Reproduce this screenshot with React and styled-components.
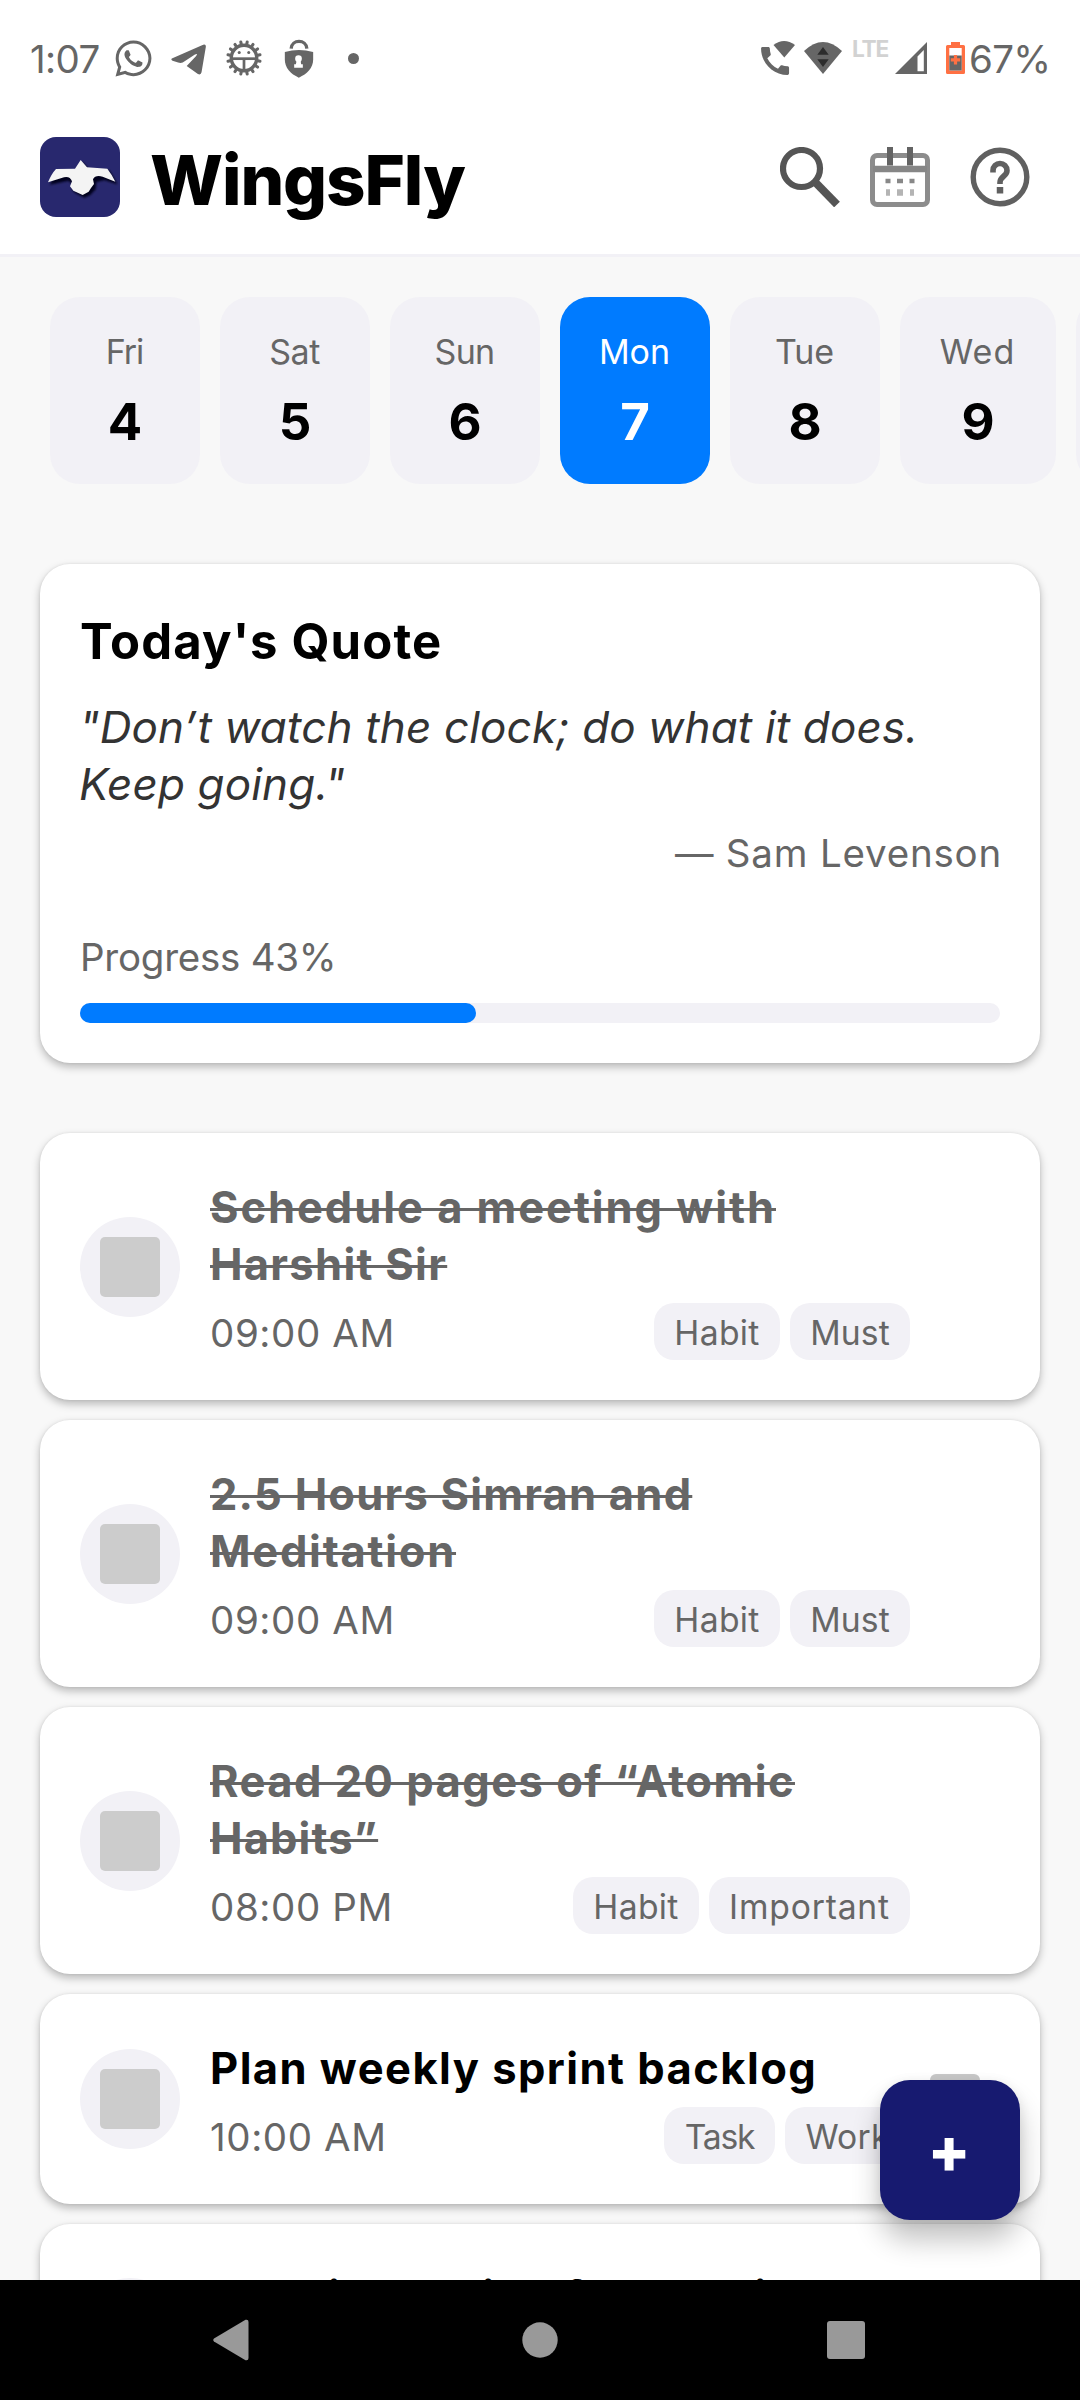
import React from "react";
import styled, { createGlobalStyle } from "styled-components";
import { FaWhatsapp } from "react-icons/fa";

const GlobalStyle = createGlobalStyle`
  *, *::before, *::after { box-sizing: border-box; }
  body { margin: 0; background: #f8f8f8; font-family: Inter, "Liberation Sans", sans-serif; }
`;

const Screen = styled.div`
  position: relative;
  width: 1080px;
  height: 2400px;
  display: flex;
  flex-direction: column;
  overflow: hidden;
  background: #f8f8f8;
  color: #000;
  white-space: nowrap;
`;

/* ---------- status bar ---------- */

const StatusBar = styled.div`
  flex: none;
  height: 100px;
  padding: 16px 31px 0 30px;
  display: flex;
  justify-content: space-between;
  align-items: center;
  background: #fff;
  color: #666;
`;

const StatusGroup = styled.div`
  display: flex;
  align-items: center;
`;

const StatusText = styled.span`
  width: ${(p) => p.$w}px;
  font-size: 38.5px;
  line-height: 46px;
  letter-spacing: ${(p) => p.$track}px;
  padding-top: 1px;
`;

const StatusIcon = styled.span`
  display: flex;
  margin-left: ${(p) => p.$gap}px;
  margin-top: ${(p) => p.$drop || 0}px;
  font-size: 41px;
`;

const Dot = styled.span`
  width: 11px;
  height: 11px;
  border-radius: 50%;
  margin-left: 34px;
  background: #666;
`;

const Network = styled.span`
  width: 37px;
  margin: 0 6px 18px 10px;
  font-size: 22.7px;
  font-weight: 700;
  line-height: 20px;
  letter-spacing: -1.2px;
  color: #d2d2d2;
`;

const TelegramGlyph = () => (
  <svg width="36" height="31" viewBox="452 72 108 94" fill="#666">
    <path d="M454 116L549 74Q558 71 557 81L544 158Q542 167 533 163L499 139L527 109Q535 99 524 104L487 128Q480 131 473 128L456 123Q450 119 454 116Z" />
  </svg>
);

const TEETH = Array.from({ length: 16 }, (_, i) => i * 22.5 + 11.25);

const BugGlyph = () => (
  <svg width="36" height="36" viewBox="-53 -53 106 106" fill="none" stroke="#666">
    {TEETH.map((a) => (
      <path key={a} d="M0 -38V-48" strokeWidth="9" strokeLinecap="round" transform={`rotate(${a})`} />
    ))}
    <circle r="37.5" strokeWidth="10" />
    <path d="M-36 2H36" strokeWidth="8" />
    <path d="M0 4V36" strokeWidth="8" />
    <circle cx="-14" cy="-16" r="4.5" fill="#666" stroke="none" />
    <circle cx="14" cy="-16" r="4.5" fill="#666" stroke="none" />
  </svg>
);

const LockGlyph = () => (
  <svg width="30" height="39" viewBox="791 55 89 117">
    <path d="M812 84C813 55 858 55 859 84" fill="none" stroke="#666" strokeWidth="10" />
    <path d="M793 94Q835 82 878 94V116C878 142 860 160 835 171C810 160 793 142 793 116Z" fill="#666" />
    <circle cx="834" cy="114" r="10" fill="#fff" />
    <path d="M829 118H840L842 131H847V141H821V131H826Z" fill="#fff" />
  </svg>
);

const WifiCallGlyph = () => (
  <svg width="36" height="36" viewBox="0 0 36 36" fill="#666">
    <path
      transform="translate(-3.6 2.3) scale(1.555)"
      d="M20.01 15.38c-1.23 0-2.42-.2-3.53-.56-.35-.12-.74-.03-1.01.24l-1.57 1.97c-2.83-1.35-5.48-3.9-6.89-6.83l1.95-1.66c.27-.28.35-.67.24-1.02-.37-1.11-.56-2.3-.56-3.53 0-.54-.45-.99-.99-.99H4.19C3.65 3 3 3.24 3 3.99 3 13.28 10.73 21 20.01 21c.71 0 .99-.63.99-1.18v-3.45c0-.54-.45-.99-.99-.99z"
    />
    <path d="M13.5 5Q24 -3 35 5L24.3 17.5Z" />
  </svg>
);

const WifiGlyph = () => (
  <svg width="38" height="32" viewBox="0 0 38 32">
    <path d="M0 9Q19 -9 38 9L19 32Z" fill="#666" />
    <path d="M13.3 12.7L19 5L24.7 12.7ZM13.3 17.3L19 25L24.7 17.3Z" fill="#2c2c2c" />
  </svg>
);

const SignalGlyph = () => (
  <svg width="32" height="32" viewBox="0 0 32 32">
    <path fillRule="evenodd" d="M0 32L32 0V32ZM22.5 14.5V29.3H28.8V8Z" fill="#666" />
  </svg>
);

const BatteryGlyph = () => (
  <svg width="19" height="32" viewBox="0 0 19 32">
    <path d="M5 0H14V3H17.5Q19 3 19 4.5V30.5Q19 32 17.5 32H1.5Q0 32 0 30.5V4.5Q0 3 1.5 3H5Z" fill="#ff7043" />
    <rect x="3.3" y="6" width="12.4" height="22.5" fill="#fff" />
    <rect x="3.3" y="13.5" width="12.4" height="15" fill="#666" />
    <path d="M9.5 13V22.5M4.8 17.8H14.2" stroke="#ff7043" strokeWidth="3.2" />
  </svg>
);

/* ---------- app header ---------- */

const Header = styled.header`
  flex: none;
  height: 157px;
  padding: 0 50px 0 40px;
  display: flex;
  align-items: center;
  background: #fff;
  border-bottom: 3px solid #f2f1f6;
`;

const Brand = styled.h1`
  flex: 1;
  margin: 0 0 0 30px;
  padding-top: 5px;
  font-size: 69px;
  line-height: 84px;
  font-weight: 800;
  letter-spacing: -1.1px;
`;

const HeaderButton = styled.button`
  display: flex;
  width: 60px;
  height: 60px;
  padding: 0;
  border: 0;
  background: none;
  margin-left: ${(p) => p.$gap || 0}px;
`;

const LogoMark = () => (
  <svg width="80" height="80" viewBox="60 351 240 240">
    <defs>
      <filter id="soft" x="-20%" y="-20%" width="140%" height="140%">
        <feGaussianBlur stdDeviation="3" />
      </filter>
    </defs>
    <rect x="60" y="351" width="240" height="240" rx="48" fill="#28286e" />
    <path
      d="M182 420L201 442L264 446L287 487L248 474L224 480L222 502L206 519L188 527L160 512L150 500L156 488L140 476L84 488L108 447L165 446Z"
      fill="#05051c"
      filter="url(#soft)"
      transform="translate(5 6)"
    />
    <path
      d="M182 420L201 442L262 446Q276 464 286 485L248 470Q226 464 219 478L222 492L213 504L206 515L188 525L160 512L150 499L156 484Q150 468 132 472L84 487Q94 462 108 447L165 446Z"
      fill="#f4f4f4"
    />
  </svg>
);

const SearchGlyph = () => (
  <svg width="60" height="60" viewBox="0 0 60 60" fill="none" stroke="#555">
    <circle cx="21.5" cy="21.5" r="18.5" strokeWidth="6.2" />
    <path d="M36 36L57 57.5" strokeWidth="8" />
  </svg>
);

const CalendarGlyph = () => (
  <svg width="60" height="60" viewBox="0 0 60 60" fill="none">
    <rect x="2.5" y="8.5" width="55" height="49" rx="4.5" stroke="#8c8c8c" strokeWidth="5" />
    <path d="M3 22H57" stroke="#868686" strokeWidth="6.5" />
    <path d="M20 0V18.5M40 0V18.5" stroke="#636363" strokeWidth="6" />
    <path d="M15.5 34H20.5M27 34H33M39.5 34H44.5" stroke="#888" strokeWidth="4.5" />
    <path d="M16 45.5H20M27 45.5H33M40 45.5H44" stroke="#b4b4b4" strokeWidth="6.5" />
  </svg>
);

const HelpGlyph = () => (
  <svg width="60" height="60" viewBox="0 0 60 60" fill="none" stroke="#606060">
    <circle cx="30" cy="30" r="26.8" strokeWidth="5.4" />
    <path d="M23 25.5V23.5A7 7 0 0 1 37 23.5C37 29.5 30 29 30 35.5V37" strokeWidth="5.6" />
    <path d="M30 40V46.5" strokeWidth="6.5" />
  </svg>
);

/* ---------- content ---------- */

const Content = styled.main`
  flex: 1;
  min-height: 0;
  overflow: hidden;
  display: flex;
  flex-direction: column;
  padding: 40px 40px 0;
`;

const DayStrip = styled.div`
  flex: none;
  display: flex;
  gap: 20px;
  padding-left: 10px;
  margin-right: -40px;
  margin-bottom: 80px;
  overflow: hidden;
`;

const DayCard = styled.div`
  flex: none;
  width: ${(p) => p.$w || 150}px;
  height: 187px;
  padding-top: 35px;
  border-radius: 30px;
  display: flex;
  flex-direction: column;
  align-items: center;
  gap: 20px;
  background: ${(p) => (p.$active ? "#007bff" : "#f2f1f6")};
  color: ${(p) => (p.$active ? "#fff" : "#000")};
`;

const DayName = styled.span`
  margin-left: -1px;
  font-size: 34px;
  line-height: 40px;
  letter-spacing: ${(p) => p.$track}px;
  color: ${(p) => (p.$active ? "#fff" : "#666")};
`;

const DayNumber = styled.span`
  font-size: 51px;
  line-height: 60px;
  font-weight: 700;
`;

const Card = styled.section`
  flex: none;
  border-radius: 30px;
  background: #fff;
  box-shadow: 0 4px 9px rgba(0, 0, 0, 0.26), 0 0 3px rgba(0, 0, 0, 0.08);
`;

const QuoteCard = styled(Card)`
  height: 499px;
  margin-bottom: 70px;
  padding: 48px 40px 40px;
  display: flex;
  flex-direction: column;
`;

const QuoteTitle = styled.h2`
  margin: 0 0 27px;
  font-size: 49px;
  line-height: 60px;
  font-weight: 700;
  letter-spacing: 1.15px;
`;

const QuoteLine = styled.div`
  margin-left: -1px;
  font-size: 44px;
  line-height: 57px;
  font-style: italic;
  color: #333;
  letter-spacing: ${(p) => p.$track}px;
`;

const Author = styled.div`
  margin: 15px -2px 0 0;
  text-align: right;
  font-size: 38.5px;
  line-height: 50px;
  letter-spacing: 0.8px;
  color: #666;
`;

const ProgressLabel = styled.div`
  margin-top: 54px;
  font-size: 38.5px;
  line-height: 50px;
  letter-spacing: -0.25px;
  color: #666;
`;

const Track = styled.div`
  margin-top: auto;
  height: 20px;
  border-radius: 10px;
  background: #f2f1f6;
`;

const Fill = styled.div`
  height: 20px;
  border-radius: 10px;
  background: #007bff;
`;

const TaskList = styled.div`
  flex: none;
  display: flex;
  flex-direction: column;
  gap: 20px;
`;

const TaskCard = styled(Card)`
  padding: 0 40px;
  display: flex;
  align-items: center;
`;

const TaskIcon = styled.div`
  flex: none;
  width: 100px;
  height: 100px;
  border-radius: 50%;
  display: grid;
  place-items: center;
  background: #f2f1f6;

  &::after {
    content: "";
    width: 60px;
    height: 60px;
    border-radius: 5px;
    background: #ccc;
  }
`;

const TaskBody = styled.div`
  width: 700px;
  margin-left: 30px;
  padding: ${(p) => 46 - p.$lift}px 0 40px;
`;

const TaskTitle = styled.div`
  font-size: 43.5px;
  line-height: 57px;
  font-weight: 700;
  letter-spacing: ${(p) => p.$track}px;
  color: ${(p) => (p.$done ? "#666" : "#000")};
`;

const TitleText = styled.span`
  text-decoration: ${(p) => (p.$done ? "line-through" : "none")};
  text-decoration-thickness: 2.5px;
  text-decoration-skip-ink: none;
`;

const TaskMeta = styled.div`
  height: 57px;
  margin-top: 10px;
  display: flex;
  align-items: flex-start;
  justify-content: space-between;
`;

const TaskTime = styled.span`
  font-size: 38.5px;
  line-height: 61px;
  letter-spacing: 0.6px;
  color: #666;
`;

const Tags = styled.div`
  display: flex;
  gap: 10px;
`;

const Tag = styled.span`
  width: ${(p) => p.$w}px;
  height: 57px;
  border-radius: 20px;
  background: #f2f1f6;
  color: #666;
  text-align: center;
  font-size: 33.7px;
  line-height: 59px;
  letter-spacing: ${(p) => p.$track}px;
`;

const CheckBox = styled.span`
  flex: none;
  width: 50px;
  height: 50px;
  margin-left: 20px;
  border-radius: 6px;
  background: #c8c8c8;
`;

const AddButton = styled.button`
  position: absolute;
  right: 60px;
  bottom: 180px;
  width: 140px;
  height: 140px;
  padding: 0 2px 0 0;
  border: 0;
  border-radius: 30px;
  background: #171a70;
  color: #fff;
  font-family: inherit;
  font-size: 63px;
  line-height: 138px;
  font-weight: 800;
  text-align: center;
  box-shadow: 0 20px 28px rgba(0, 0, 0, 0.24), 0 2px 12px rgba(0, 0, 0, 0.08);
`;

const NavBar = styled.nav`
  flex: none;
  height: 120px;
  padding-left: 213px;
  display: flex;
  align-items: center;
  background: #000;
`;

const NavButton = styled.span`
  display: flex;
  margin-left: ${(p) => p.$gap || 0}px;
`;

const days = [
  { name: "Fri", num: 4, track: -1 },
  { name: "Sat", num: 5, track: -0.5 },
  { name: "Sun", num: 6, track: -0.7 },
  { name: "Mon", num: 7, track: 0, active: true },
  { name: "Tue", num: 8, track: -0.2 },
  { name: "Wed", num: 9, track: 1, w: 156 },
];

const HABIT = { text: "Habit", w: 126, track: 0.3 };
const MUST = { text: "Must", w: 120, track: 0.1 };

const tasks = [
  {
    lines: [["Schedule a meeting with", 1.95], ["Harshit Sir", 1.3]],
    time: "09:00 AM",
    tags: [HABIT, MUST],
    done: true,
  },
  {
    lines: [["2.5 Hours Simran and", 1.22], ["Meditation", 1.75]],
    time: "09:00 AM",
    tags: [HABIT, MUST],
    done: true,
  },
  {
    lines: [["Read 20 pages of “Atomic", 1.47], ["Habits”", 1.15]],
    time: "08:00 PM",
    tags: [HABIT, { text: "Important", w: 201, track: 0.8 }],
    done: true,
  },
  {
    lines: [["Plan weekly sprint backlog", 1.45]],
    time: "10:00 AM",
    tags: [{ text: "Task", w: 111, track: -1.2 }, { text: "Work", w: 125, track: 0.2 }],
    check: true,
  },
  {
    lines: [["Morning racing for a cruise", 1.4]],
    tags: [],
    lift: 2,
  },
];

const progress = 43;

export default function App() {
  return (
    <Screen>
      <GlobalStyle />
      <StatusBar>
        <StatusGroup>
          <StatusText $w={71} $track={-0.6}>1:07</StatusText>
          <StatusIcon $gap={12}><FaWhatsapp /></StatusIcon>
          <StatusIcon $gap={17} $drop={3}><TelegramGlyph /></StatusIcon>
          <StatusIcon $gap={19}><BugGlyph /></StatusIcon>
          <StatusIcon $gap={22}><LockGlyph /></StatusIcon>
          <Dot />
        </StatusGroup>
        <StatusGroup>
          <StatusIcon $gap={0}><WifiCallGlyph /></StatusIcon>
          <StatusIcon $gap={8}><WifiGlyph /></StatusIcon>
          <Network>LTE</Network>
          <StatusIcon $gap={0}><SignalGlyph /></StatusIcon>
          <StatusIcon $gap={19}><BatteryGlyph /></StatusIcon>
          <StatusIcon $gap={4}><StatusText $w={80} $track={-0.7}>67%</StatusText></StatusIcon>
        </StatusGroup>
      </StatusBar>

      <Header>
        <LogoMark />
        <Brand>WingsFly</Brand>
        <HeaderButton><SearchGlyph /></HeaderButton>
        <HeaderButton $gap={30}><CalendarGlyph /></HeaderButton>
        <HeaderButton $gap={40}><HelpGlyph /></HeaderButton>
      </Header>

      <Content>
        <DayStrip>
          {days.map((d) => (
            <DayCard key={d.num} $active={d.active} $w={d.w}>
              <DayName $active={d.active} $track={d.track}>{d.name}</DayName>
              <DayNumber>{d.num}</DayNumber>
            </DayCard>
          ))}
          <DayCard />
        </DayStrip>

        <QuoteCard>
          <QuoteTitle>Today's Quote</QuoteTitle>
          <QuoteLine $track={0.15}>"Don’t watch the clock; do what it does.</QuoteLine>
          <QuoteLine $track={0.15}>Keep going."</QuoteLine>
          <Author>— Sam Levenson</Author>
          <ProgressLabel>Progress {progress}%</ProgressLabel>
          <Track>
            <Fill style={{ width: `${progress}%` }} />
          </Track>
        </QuoteCard>

        <TaskList>
          {tasks.map((t) => (
            <TaskCard key={t.lines[0][0]}>
              <TaskIcon />
              <TaskBody $lift={t.lift || 0}>
                {t.lines.map(([text, track]) => (
                  <TaskTitle key={text} $track={track} $done={t.done}>
                    <TitleText $done={t.done}>{text}</TitleText>
                  </TaskTitle>
                ))}
                <TaskMeta>
                  {t.time && <TaskTime>{t.time}</TaskTime>}
                  <Tags>
                    {t.tags.map((g) => (
                      <Tag key={g.text} $w={g.w} $track={g.track}>{g.text}</Tag>
                    ))}
                  </Tags>
                </TaskMeta>
              </TaskBody>
              {t.check && <CheckBox />}
            </TaskCard>
          ))}
        </TaskList>
      </Content>

      <AddButton>+</AddButton>

      <NavBar>
        <NavButton>
          <svg width="36" height="42" viewBox="0 0 36 42" fill="#999">
            <path d="M1 19.5L32.5 0.8Q35.5 0 35.5 3V39Q35.5 42 32.5 41.2L1 22.5Q-0.5 21 1 19.5Z" />
          </svg>
        </NavButton>
        <NavButton $gap={273}>
          <svg width="36" height="36" viewBox="0 0 36 36" fill="#999">
            <circle cx="18" cy="18" r="17.7" />
          </svg>
        </NavButton>
        <NavButton $gap={269}>
          <svg width="38" height="38" viewBox="0 0 38 38" fill="#999">
            <rect width="38" height="38" rx="3" />
          </svg>
        </NavButton>
      </NavBar>
    </Screen>
  );
}
